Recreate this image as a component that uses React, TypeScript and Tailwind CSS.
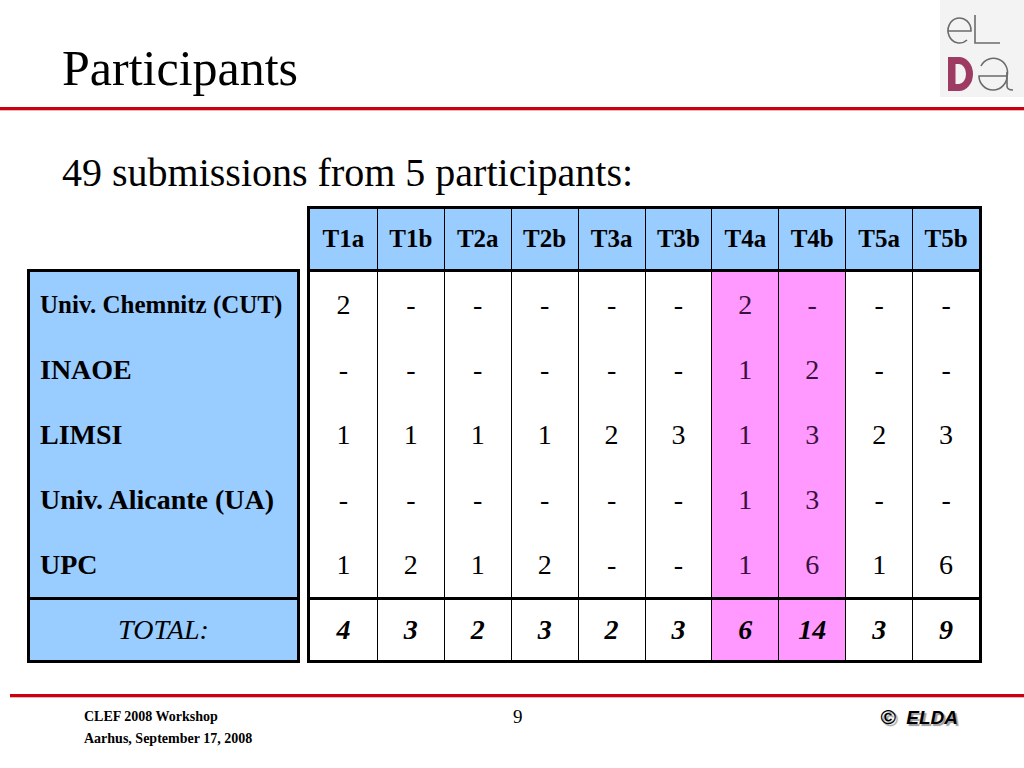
import React from "react";

const headers = ["T1a", "T1b", "T2a", "T2b", "T3a", "T3b", "T4a", "T4b", "T5a", "T5b"];
const rows: { label: string; small?: boolean; vals: string[] }[] = [
  { label: "Univ. Chemnitz (CUT)", small: true, vals: ["2", "-", "-", "-", "-", "-", "2", "-", "-", "-"] },
  { label: "INAOE", vals: ["-", "-", "-", "-", "-", "-", "1", "2", "-", "-"] },
  { label: "LIMSI", vals: ["1", "1", "1", "1", "2", "3", "1", "3", "2", "3"] },
  { label: "Univ. Alicante (UA)", vals: ["-", "-", "-", "-", "-", "-", "1", "3", "-", "-"] },
  { label: "UPC", vals: ["1", "2", "1", "2", "-", "-", "1", "6", "1", "6"] },
];
const totals = ["4", "3", "2", "3", "2", "3", "6", "14", "3", "9"];

function Logo() {
  return (
    <div className="w-[84px] h-[97px] bg-[#f3f3f3]">
      <svg width="84" height="97" viewBox="0 0 84 97">
        <g fill="none" stroke="#6b6b6b" strokeWidth="1.6">
          <path d="M8 31 H31 A11.5 12.5 0 1 0 27 40" />
          <path d="M35 15 V43 H60" />
          <path d="M41 66 A14 14 0 0 1 67 76 H39 A14 14 0 0 0 67 76" />
          <path d="M67 72 V86 Q67 90 73 90" />
        </g>
        <path
          fillRule="evenodd"
          fill="#9e3b62"
          d="M8 57 H19 A14 17 0 0 1 19 91 H8 Z M15.5 64 H19 A7 10 0 0 1 19 84 H15.5 Z"
        />
      </svg>
    </div>
  );
}

export default function App() {
  return (
    <div className="w-[1024px] h-[768px] bg-white overflow-hidden font-['Liberation_Serif',serif] text-black">
      {/* Header */}
      <div className="flex justify-between items-start h-[107px]">
        <div className="pl-[62px] pt-[43px] text-[50px] leading-[50px]">Participants</div>
        <Logo />
      </div>
      <div className="h-[3px] bg-[#c8000f]" />
      <div className="h-[1px] bg-[#eeb3b6]" />

      {/* Subtitle */}
      <div className="pl-[62px] mt-[42px] text-[40px] leading-[40px]">49 submissions from 5 participants:</div>

      {/* Tables */}
      <div className="flex items-start gap-[7px] pl-[27px] mt-[13px]">
        <div className="mt-[63px] w-[273px] border-[3px] border-black bg-[#99ccff]">
          {rows.map((r) => (
            <div key={r.label} className="h-[65px] flex items-center pl-[10px]">
              <span className={r.small ? "font-bold text-[25px] leading-none" : "font-bold text-[28px] leading-none"}>
                {r.label}
              </span>
            </div>
          ))}
          <div className="h-[63px] border-t-[3px] border-black flex items-center justify-center italic text-[28px]">
            TOTAL:
          </div>
        </div>

        <div className="w-[675px] border-[3px] border-black">
          <div className="grid grid-cols-10 h-[63px] border-b-[3px] border-black bg-[#99ccff]">
            {headers.map((h, i) => (
              <div
                key={h}
                className={
                  i > 0
                    ? "border-l-[1.5px] border-black flex items-center justify-center font-bold text-[25px]"
                    : "flex items-center justify-center font-bold text-[25px]"
                }
              >
                {h}
              </div>
            ))}
          </div>
          {rows.map((r) => (
            <div key={r.label} className="grid grid-cols-10 h-[65px]">
              {r.vals.map((v, i) => (
                <div
                  key={i}
                  className={
                    i === 6 || i === 7
                      ? "bg-[#ff99ff] border-l-[1.5px] border-black flex items-center justify-center text-[28px] text-[#3a1040]"
                      : i > 0
                      ? "border-l-[1.5px] border-black flex items-center justify-center text-[28px]"
                      : "flex items-center justify-center text-[28px]"
                  }
                >
                  {v}
                </div>
              ))}
            </div>
          ))}
          <div className="grid grid-cols-10 h-[63px] border-t-[3px] border-black">
            {totals.map((v, i) => (
              <div
                key={i}
                className={
                  i === 6 || i === 7
                    ? "bg-[#ff99ff] border-l-[1.5px] border-black flex items-center justify-center text-[28px] font-bold italic"
                    : i > 0
                    ? "border-l-[1.5px] border-black flex items-center justify-center text-[28px] font-bold italic"
                    : "flex items-center justify-center text-[28px] font-bold italic"
                }
              >
                {v}
              </div>
            ))}
          </div>
        </div>
      </div>

      {/* Footer */}
      <div className="mt-[31px] ml-[10px] h-[3px] bg-[#c8000f]" />
      <div className="ml-[10px] h-[1px] bg-[#eeb3b6]" />
      <div className="flex items-start pt-[8px]">
        <div className="ml-[84px] w-[429px] font-bold text-[14px] leading-[22px]">
          <div>CLEF 2008 Workshop</div>
          <div>Aarhus, September 17, 2008</div>
        </div>
        <div className="text-[19px] leading-[19px] pt-[1px]">9</div>
        <div className="ml-auto mr-[66px] pt-[1px] font-['Liberation_Sans',sans-serif] font-bold italic text-[19px] leading-[20px] [text-shadow:2px_2px_1px_#9a9a9a]">
          <span className="text-[21px]">©</span>&nbsp; ELDA
        </div>
      </div>
    </div>
  );
}
